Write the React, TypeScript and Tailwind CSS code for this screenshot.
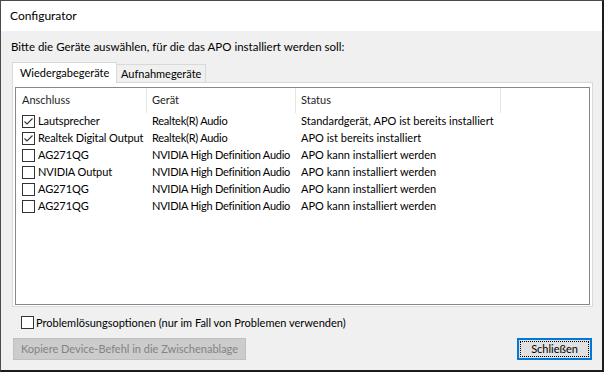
import React from "react";

const font = { fontFamily: "Lato, 'Liberation Sans', sans-serif" };

function Check({ checked }: { checked: boolean }) {
  return (
    <span className="inline-flex w-[13px] h-[13px] shrink-0 border border-[#333333] bg-white items-center justify-center">
      {checked && (
        <svg width="11" height="11" viewBox="0 0 11 11">
          <polyline points="1.5,5.5 4,8 9.5,2.5" fill="none" stroke="#333333" strokeWidth="1.1" />
        </svg>
      )}
    </span>
  );
}

const rows = [
  { c: true, a: "Lautsprecher", g: "Realtek(R) Audio", s: "Standardgerät, APO ist bereits installiert" },
  { c: true, a: "Realtek Digital Output", g: "Realtek(R) Audio", s: "APO ist bereits installiert" },
  { c: false, a: "AG271QG", g: "NVIDIA High Definition Audio", s: "APO kann installiert werden" },
  { c: false, a: "NVIDIA Output", g: "NVIDIA High Definition Audio", s: "APO kann installiert werden" },
  { c: false, a: "AG271QG", g: "NVIDIA High Definition Audio", s: "APO kann installiert werden" },
  { c: false, a: "AG271QG", g: "NVIDIA High Definition Audio", s: "APO kann installiert werden" },
];

export default function App() {
  return (
    <div
      className="w-[604px] h-[372px] flex flex-col border-l border-t border-[#4a4a4a] border-r-2 border-r-[#1c1c1c] border-b-2 border-b-[#1c1c1c] text-[11px] text-black overflow-hidden whitespace-nowrap"
      style={font}
    >
      <div className="h-[30px] shrink-0 bg-white flex items-center pl-[9px] text-[12px] leading-[16px]">
        Configurator
      </div>
      <div className="flex-1 bg-[#f0f0f0] flex flex-col">
        <div className="pt-[8px] pl-[10px] leading-[16px] h-[24px] text-[11.5px]">
          Bitte die Geräte auswählen, für die das APO installiert werden soll:
        </div>
        <div className="ml-[11px] mt-[7px] w-[581px] flex flex-col">
          <div className="flex items-end h-[20px] relative z-10">
            <div className="w-[105px] h-[21px] -mb-px bg-white border-t border-l border-r border-[#d9d9d9] pl-[7px] leading-[19px]">
              Wiedergabegeräte
            </div>
            <div className="w-[89px] h-[18px] bg-[#f0f0f0] border-t border-r border-[#d9d9d9] pl-[4px] leading-[17px]">
              Aufnahmegeräte
            </div>
          </div>
          <div className="h-[225px] bg-white border border-[#d9d9d9] pt-[4px] pl-[2px] pr-[2px] pb-[1px] flex flex-col">
            <div className="flex-1 border border-[#828790] bg-white flex flex-col">
              <div className="grid grid-cols-[131px_149px_205px_1fr] h-[25px] text-[#1e1e1e]">
                <div className="border-r border-[#e5e5e5] pl-[6px] flex items-center">Anschluss</div>
                <div className="border-r border-[#e5e5e5] pl-[5px] flex items-center">Gerät</div>
                <div className="border-r border-[#e5e5e5] pl-[5px] flex items-center">Status</div>
                <div />
              </div>
              {rows.map((r, i) => (
                <div key={i} className="grid grid-cols-[131px_149px_205px_1fr] h-[17px] items-center">
                  <div className="pl-[6px] flex items-center gap-[3px] tracking-[-0.1px]">
                    <Check checked={r.c} />
                    <span>{r.a}</span>
                  </div>
                  <div className="pl-[5px] tracking-[-0.25px]">{r.g}</div>
                  <div className="pl-[5px]">{r.s}</div>
                  <div />
                </div>
              ))}
            </div>
          </div>
        </div>
        <div className="mt-[9px] ml-[20px] flex items-center gap-[2px] h-[13px]">
          <Check checked={false} />
          <span className="leading-[16px]">Problemlösungsoptionen (nur im Fall von Problemen verwenden)</span>
        </div>
        <div className="mt-[9px] flex items-start justify-between pl-[12px] pr-[10px]">
          <div className="w-[233px] h-[22px] bg-[#cccccc] border border-[#bfbfbf] text-[#838383] flex items-center justify-center">
            Kopiere Device-Befehl in die Zwischenablage
          </div>
          <div className="relative w-[75px] h-[22px] bg-[#e1e1e1] border-2 border-[#0078d7] flex items-center justify-center">
            <span className="absolute inset-[1px] border border-dotted border-black" />
            Schließen
          </div>
        </div>
      </div>
    </div>
  );
}
